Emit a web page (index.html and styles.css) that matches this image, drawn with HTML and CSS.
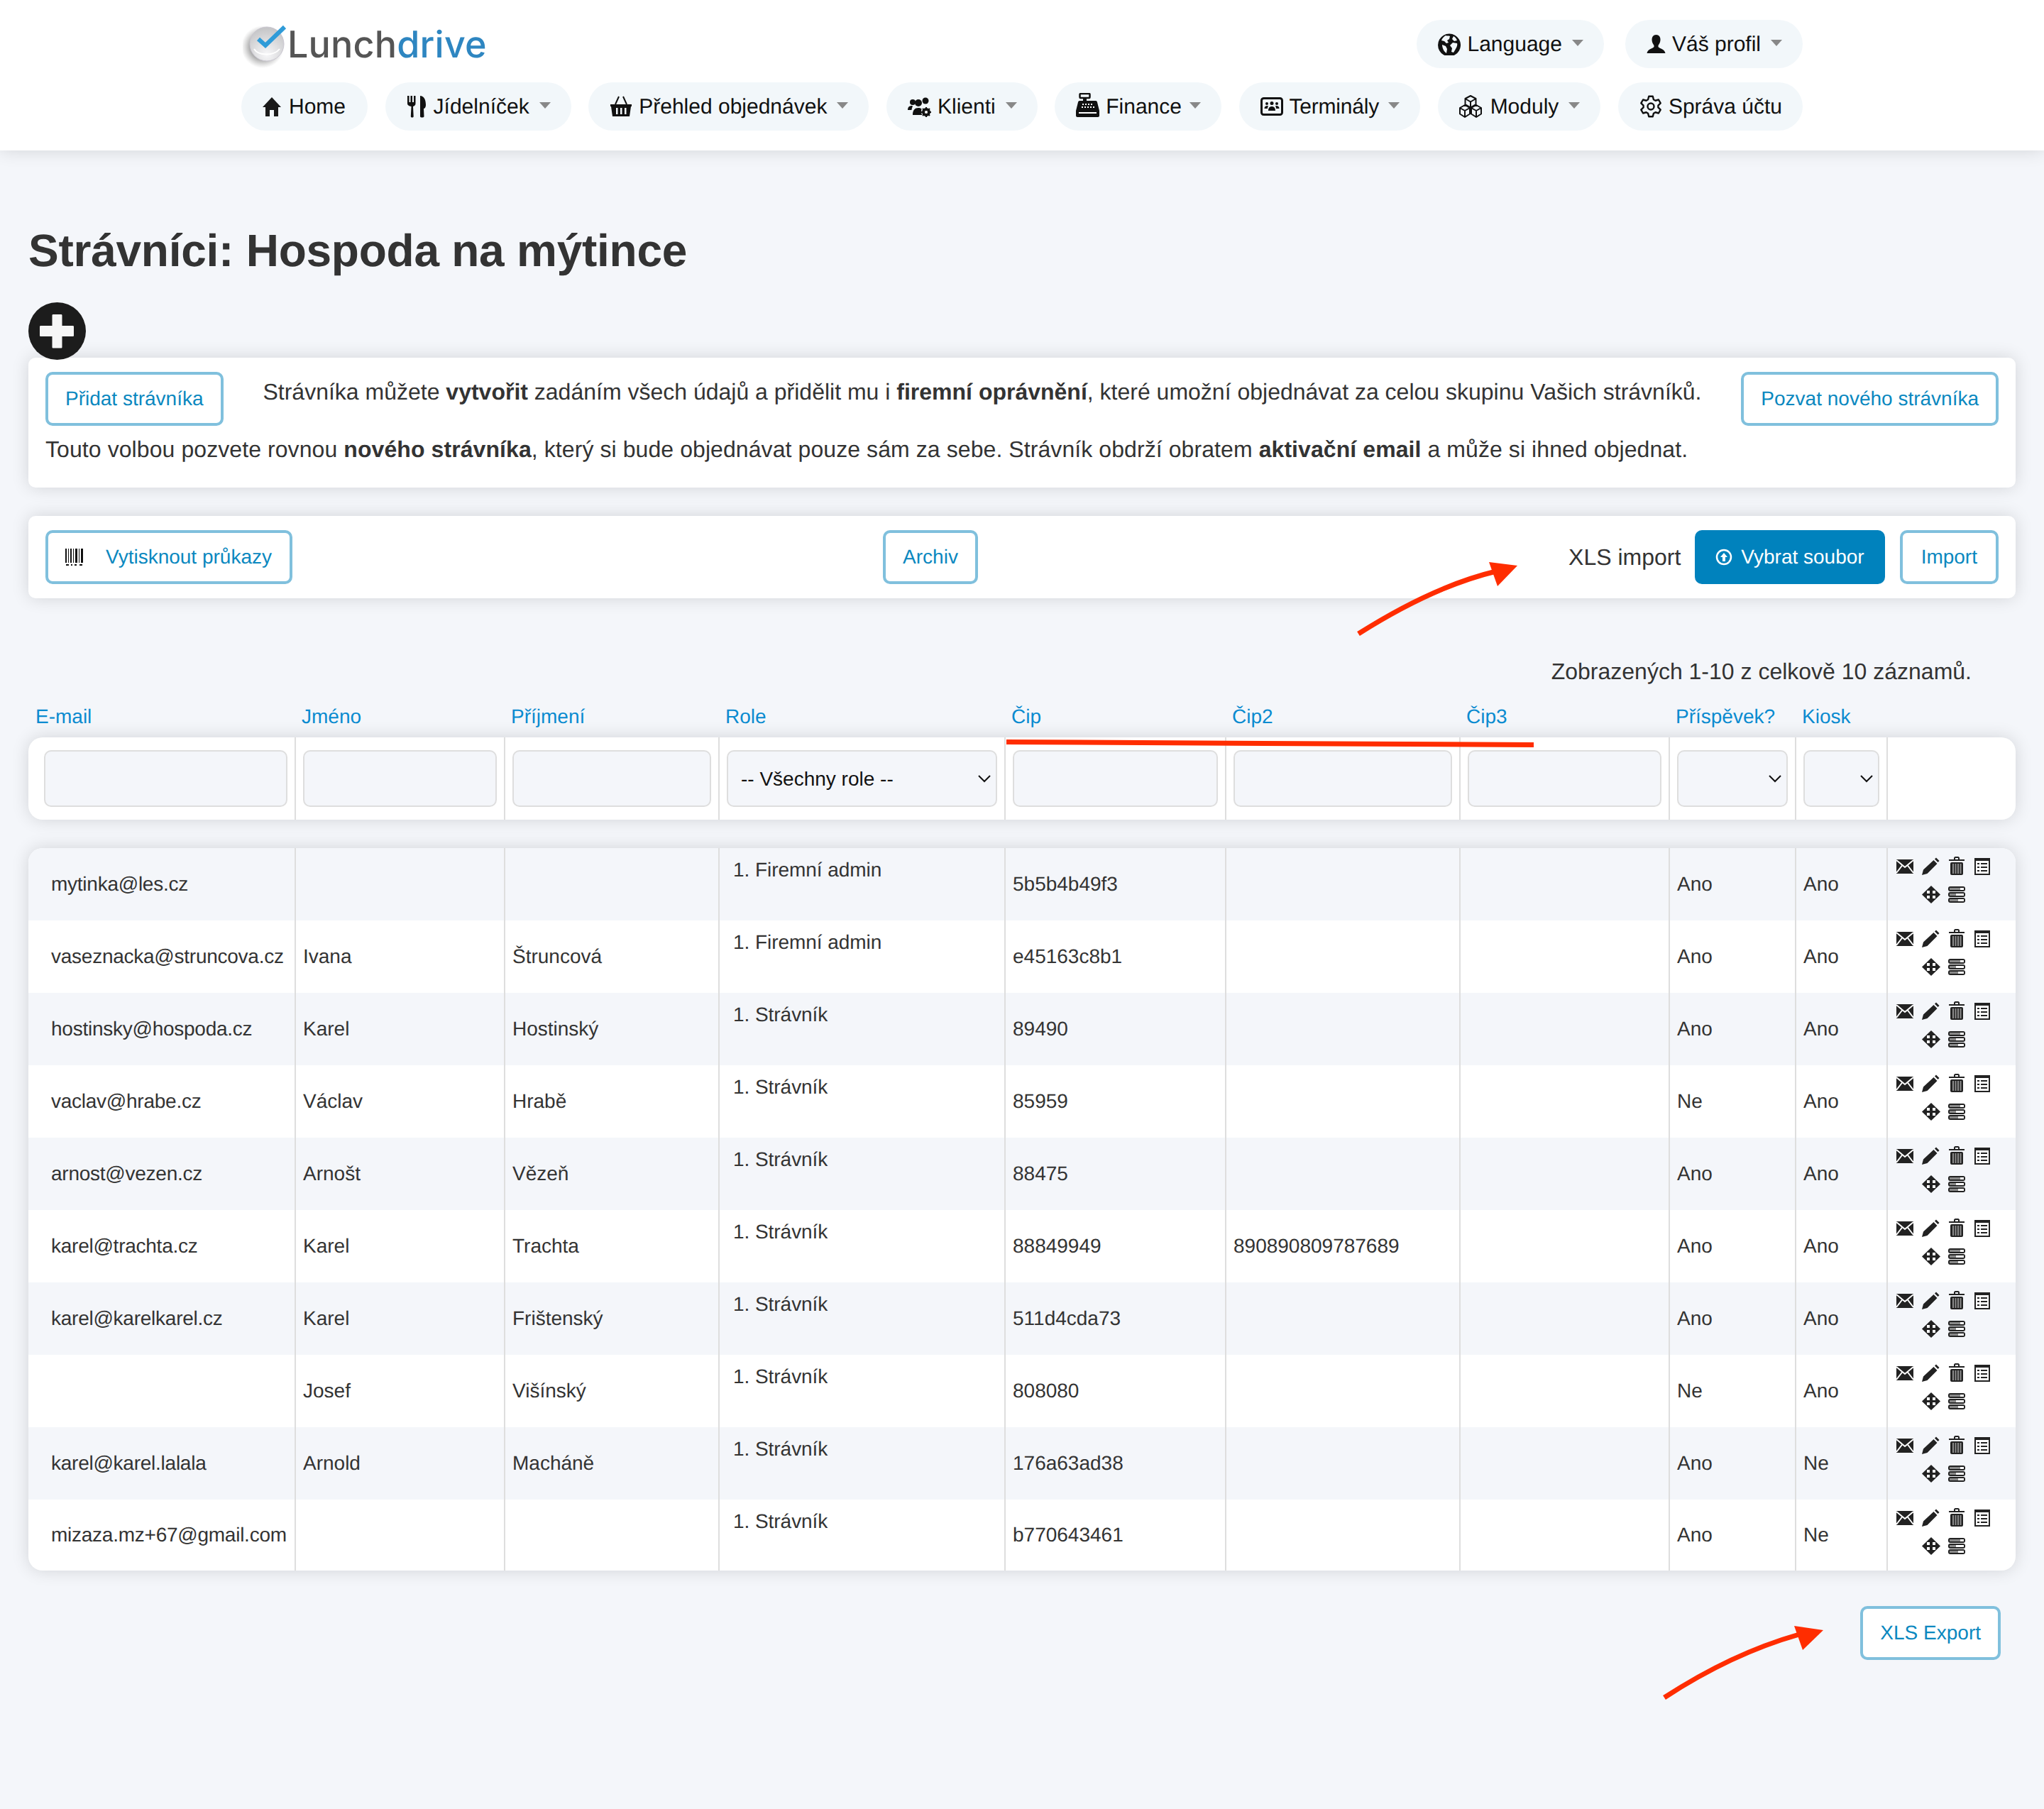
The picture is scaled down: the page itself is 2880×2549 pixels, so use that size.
FILE: index.html
```html
<!DOCTYPE html>
<html lang="cs">
<head>
    <meta charset="UTF-8">
    <title>Strávníci: Hospoda na mýtince - Lunchdrive</title>
    <link rel="stylesheet" href="styles.css">
</head>
<body>

<!-- sdilene ikony -->
<svg class="defs" width="0" height="0">
    <symbol id="i-mail" viewBox="0 0 28 28"><rect x="1" y="4" width="24" height="20" fill="#222"/><path d="M1 5l12 10L25 5M1 23l8.500-11M25 23l-8.500-11" fill="none" stroke="#fff" stroke-width="2"/></symbol>
    <symbol id="i-pencil" viewBox="0 0 28 28"><path d="M1 26l2-7.500L17.500 5l5 5L8.500 24zM19 3.500L21 1.500l4.500 4.500-2 2z" fill="#222"/></symbol>
    <symbol id="i-trash" viewBox="0 0 28 28"><path d="M3 4h7V2c0-1 1-2 2-2h4c1 0 2 1 2 2v2h7v2H3zM12 2v2h4V2z" fill="#222" fill-rule="evenodd"/><rect x="5" y="8" width="18" height="18" rx="2" fill="#222"/><path d="M9 10v14M12.500 10v14M16 10v14M19.500 10v14" stroke="#8a8a8a" stroke-width="2"/></symbol>
    <symbol id="i-list" viewBox="0 0 28 28"><rect x="3" y="2" width="22" height="24" fill="#222"/><rect x="5" y="6" width="18" height="18" fill="#fff"/><path d="M7 9h3v2H7zM12 9h9v2h-9zM7 14h3v2H7zM12 14h9v2h-9zM7 19h3v2H7zM12 19h9v2h-9z" fill="#222"/></symbol>
    <symbol id="i-move" viewBox="0 0 28 28"><path d="M14 1l13 12.500L14 26 1 13.500z" fill="#222"/><path d="M8 8h4v4H8zM16 8h4v4h-4zM8 15h4v4H8zM16 15h4v4h-4z" fill="#fff"/></symbol>
    <symbol id="i-tasks" viewBox="0 0 28 28"><rect x="2" y="2" width="24" height="7" rx="3" fill="#222"/><rect x="2" y="10" width="24" height="7" rx="3" fill="#222"/><rect x="2" y="18" width="24" height="7" rx="3" fill="#222"/><rect x="4" y="4" width="20" height="3" fill="#fff"/><rect x="4" y="12" width="20" height="3" fill="#fff"/><rect x="4" y="20" width="20" height="3" fill="#fff"/><rect x="4" y="4" width="15" height="3" fill="#888"/><rect x="4" y="12" width="9" height="3" fill="#888"/><rect x="4" y="20" width="12" height="3" fill="#888"/></symbol>
</svg>

<header class="topbar">
    <div class="topbar-in">
        <div class="toprow">
            <a class="logo" href="#">
                <svg class="logo-mark" width="70" height="76" viewBox="0 0 70 76">
                    <defs>
                        <radialGradient id="disc" cx="0.5" cy="0.8" r="0.9">
                            <stop offset="0" stop-color="#f7f7f9"/>
                            <stop offset="1" stop-color="#bdbdbf"/>
                        </radialGradient>
                        <radialGradient id="drop" cx="0.5" cy="0.5" r="0.5">
                            <stop offset="0.6" stop-color="#777" stop-opacity="0.6"/>
                            <stop offset="1" stop-color="#999" stop-opacity="0"/>
                        </radialGradient>
                    </defs>
                    <circle cx="28" cy="41" r="30" fill="url(#drop)"/>
                    <circle cx="34" cy="37" r="24" fill="url(#disc)" stroke="#c9c6d0"/>
                    <path d="M16 44c6 10 28 10 36 0" fill="none" stroke="#fff" stroke-width="2"/>
                    <path d="M22 30l10 9L59 13" fill="none" stroke="#2f9bd8" stroke-width="6"/>
                </svg>
                <span class="logo-txt">Lunch<b>drive</b></span>
            </a>
            <a class="pill" href="#">
                <svg class="ico" width="32" height="32" viewBox="0 0 32 32"><path d="M16 1.500a16 16 0 1 0 .1 0zM11 4c2 1 4 0 6 1l-1 4-3 2 2 3-3 1-3-3-4-1c1-3 3-5 6-7zM21 14l6 1c1 3-1 6-2 8l-3 5-3-1 1-5-3-4zM6 17l5 2 2 4-1 6c-3-2-6-7-6-12zM22 5c2 1 4 3 5 6l-4 1-3-3z" fill="#111" fill-rule="evenodd"/></svg>
                Language<i class="caret"></i>
            </a>
            <a class="pill" href="#">
                <svg class="ico ico-user" width="27" height="32" viewBox="0 0 27 32"><path d="M13.500 3c4 0 6 3 6 7 0 3-1.500 6-3 8v2c1 2 9 3 10 9H.5c1-6 9-7 10-9v-2c-1.500-2-3-5-3-8 0-4 2-7 6-7z" fill="#111"/></svg>
                Váš profil<i class="caret"></i>
            </a>
        </div>
        <nav class="navrow">
            <a class="pill pill-home" href="#">
                <svg class="ico ico-home" width="26" height="32" viewBox="0 0 26 32"><path d="M13 3l13 14h-4v13h-6v-9h-6v9H4V17H0z" fill="#1a1a1a"/></svg>
                Home
            </a>
            <a class="pill" href="#">
                <svg class="ico ico-cut" width="28" height="32" viewBox="0 0 28 32"><path d="M1 1h2.500v9H5.500V1H8v9h2V1h2.500v11c0 2-1.500 3.500-3.500 4l.7 14c0 2-3.900 2-3.900 0l.7-14C3 15.500 1 14 1 12zM19 1c5 0 8 5 8 13 0 3-1.500 5-3 5l.5 11c0 2-5.500 2-5.500 0z" fill="#111"/></svg>
                Jídelníček<i class="caret"></i>
            </a>
            <a class="pill" href="#">
                <svg class="ico" width="32" height="32" viewBox="0 0 32 32"><path d="M1 13h30v3h-1l-2 14H4L2 16H1zM9 18v9h2.500v-9zM15 18v9h2.500v-9zM21 18v9h2.500v-9z" fill="#111" fill-rule="evenodd"/><path d="M8 13l5-11M24 13L19 2" stroke="#111" stroke-width="2" fill="none"/></svg>
                Přehled objednávek<i class="caret"></i>
            </a>
            <a class="pill" href="#">
                <svg class="ico" width="33" height="32" viewBox="0 0 33 32"><circle cx="7" cy="10" r="4" fill="#111"/><circle cx="25" cy="8" r="4.500" fill="#111"/><circle cx="15" cy="11" r="5" fill="#111"/><path d="M0 21c0-4 2-6 6-6l1 .5C6 18 5.500 20 5.500 21zM7 28c0-7 3-10 8-10 2 0 3.500.5 4.500 1.500-1 3 0 8 1 8.500z" fill="#111"/><circle cx="26" cy="24" r="4.500" fill="none" stroke="#111" stroke-width="3"/><path d="M26 17v14M19 24h14M21 19l10 10M31 19L21 29" stroke="#111" stroke-width="2"/><circle cx="26" cy="24" r="2" fill="#fff"/></svg>
                Klienti<i class="caret"></i>
            </a>
            <a class="pill pill-fin" href="#">
                <svg class="ico ico-fin" width="33" height="34" viewBox="0 0 33 34"><rect x="5.500" y="1" width="14" height="6" rx="1" fill="none" stroke="#111" stroke-width="2.500"/><path d="M10 7h5v4h-5z" fill="#111"/><path d="M5 11h23c1 0 2 1 2 2l3 12v7c0 1-1 2-2 2H2c-1 0-2-1-2-2v-7l3-12c0-1 1-2 2-2z" fill="#111"/><path d="M9 15h2v2H9zM13 15h2v2h-2zM17 15h2v2h-2zM21 15h2v2h-2zM8 19h2v2H8zM12 19h2v2h-2zM16 19h2v2h-2zM20 19h2v2h-2zM24 19h2v2h-2zM4 27h25v2H4z" fill="#fff"/></svg>
                Finance<i class="caret"></i>
            </a>
            <a class="pill pill-term" href="#">
                <svg class="ico" width="32" height="32" viewBox="0 0 32 32"><rect x="1.500" y="4.500" width="29" height="23" rx="3" fill="none" stroke="#111" stroke-width="3"/><circle cx="9" cy="12" r="2" fill="#111"/><circle cx="16" cy="11.500" r="2.500" fill="#111"/><circle cx="23" cy="12" r="2" fill="#111"/><path d="M5.500 19c0-3 2-4 4-4 1 0 1.500.5 1.500.5-1 1-1 3-1 3.500zM26.500 19c0-3-2-4-4-4-1 0-1.500.5-1.500.5 1 1 1 3 1 3.500zM11 22c0-4 2-6 5-6s5 2 5 6z" fill="#111"/></svg>
                Terminály<i class="caret"></i>
            </a>
            <a class="pill pill-mod" href="#">
                <svg class="ico" width="32" height="32" viewBox="0 0 32 32"><g fill="none" stroke="#111" stroke-width="2" stroke-linejoin="round"><path d="M16 1l7.500 4v8L16 17.500 8.500 13V5zM8.500 5L16 9.500 23.500 5M16 9.500v8"/><path d="M8 14l7 4v8.500L8 31l-7-4.500V18zM1 18l7 4 7-4M8 22v9"/><path d="M24 14l7 4v8.500L24 31l-7-4.500V18zM17 18l7 4 7-4M24 22v9"/></g></svg>
                Moduly<i class="caret"></i>
            </a>
            <a class="pill" href="#">
                <svg class="ico" width="32" height="32" viewBox="0 0 32 32"><polygon points="12.070,6.260 13.230,1.770 18.770,1.770 19.930,6.260 22.460,7.730 26.940,6.490 29.710,11.280 26.400,14.540 26.400,17.460 29.710,20.720 26.940,25.510 22.460,24.270 19.930,25.740 18.770,30.230 13.230,30.230 12.070,25.740 9.540,24.270 5.060,25.510 2.290,20.720 5.600,17.460 5.600,14.540 2.290,11.280 5.060,6.490 9.540,7.730" fill="none" stroke="#111" stroke-width="2.400" stroke-linejoin="round"/><circle cx="16" cy="16" r="4.500" fill="none" stroke="#111" stroke-width="2.400"/></svg>
                Správa účtu
            </a>
        </nav>
    </div>
</header>

<main class="obsah">
    <h1>Strávníci: Hospoda na mýtince</h1>

    <svg class="plus" width="81" height="81" viewBox="0 0 81 81"><circle cx="40.500" cy="40.500" r="40.500" fill="#1c1c1c"/><path d="M35 17h11c1 0 1.500.5 1.500 1.500V33h15c1 0 1.500.5 1.500 1.500v12c0 1-.5 1.500-1.500 1.500h-15v15c0 1-.5 1.500-1.500 1.500H35c-1 0-1.500-.5-1.500-1.500V48h-16c-1 0-1.500-.5-1.500-1.500v-12c0-1 .5-1.500 1.500-1.500h16V18.500c0-1 .5-1.500 1.500-1.500z" fill="#f6f6f6"/></svg>

    <section class="karta karta-info">
        <div class="info-radek">
            <a class="btn" href="#">Přidat strávníka</a>
            <p class="info-stred">Strávníka můžete <b>vytvořit</b> zadáním všech údajů a přidělit mu i <b>firemní oprávnění</b>, které umožní objednávat za celou skupinu Vašich strávníků.</p>
            <a class="btn" href="#">Pozvat nového strávníka</a>
        </div>
        <p class="info-dole">Touto volbou pozvete rovnou <b>nového strávníka</b>, který si bude objednávat pouze sám za sebe. Strávník obdrží obratem <b>aktivační email</b> a může si ihned objednat.</p>
    </section>

    <section class="karta karta-akce">
        <a class="btn btn-tisk" href="#">
            <svg width="26" height="24" viewBox="0 0 26 24"><path d="M0 0h2v20H0zM4 0h1v20H4zM7 0h2v20H7zM11 0h1v20h-1zM14 0h3v20h-3zM19 0h1v20h-1zM22 0h3v20h-3zM1 22h4v2H1zM8 22h2v2H8zM13 22h3v2h-3zM20 22h4v2h-4z" fill="#111"/></svg>
            Vytisknout průkazy
        </a>
        <a class="btn" href="#">Archiv</a>
        <div class="import">
            <span class="import-txt">XLS import</span>
            <a class="btn btn-plny" href="#">
                <svg width="24" height="24" viewBox="0 0 24 24"><circle cx="12" cy="12" r="10" fill="none" stroke="#fff" stroke-width="2.500"/><path d="M12 6l5 6h-3v6h-4v-6H7z" fill="#fff"/></svg>
                Vybrat soubor
            </a>
            <a class="btn btn-import" href="#">Import</a>
        </div>
    </section>

    <p class="pocet">Zobrazených 1-10 z celkově 10 záznamů.</p>

    <div class="sloupce hlavicka">
        <a href="#">E-mail</a>
        <a href="#">Jméno</a>
        <a href="#">Příjmení</a>
        <a href="#">Role</a>
        <a href="#">Čip</a>
        <a href="#">Čip2</a>
        <a href="#">Čip3</a>
        <a href="#">Příspěvek?</a>
        <a href="#">Kiosk</a>
        <span></span>
    </div>

    <div class="sloupce filtr">
        <div><input type="text"></div>
        <div><input type="text"></div>
        <div><input type="text"></div>
        <div><select><option>-- Všechny role --</option></select></div>
        <div><input type="text"></div>
        <div><input type="text"></div>
        <div><input type="text"></div>
        <div><select><option></option></select></div>
        <div><select><option></option></select></div>
        <div></div>
    </div>

    <div class="data">
        <div class="sloupce radek">
            <div>mytinka@les.cz</div><div></div><div></div><div class="role">1. Firemní admin</div><div>5b5b4b49f3</div><div></div><div></div><div>Ano</div><div>Ano</div>
            <div class="ikony"><svg><use href="#i-mail"/></svg><svg><use href="#i-pencil"/></svg><svg><use href="#i-trash"/></svg><svg><use href="#i-list"/></svg><svg><use href="#i-move"/></svg><svg><use href="#i-tasks"/></svg></div>
        </div>
        <div class="sloupce radek">
            <div>vaseznacka@struncova.cz</div><div>Ivana</div><div>Štruncová</div><div class="role">1. Firemní admin</div><div>e45163c8b1</div><div></div><div></div><div>Ano</div><div>Ano</div>
            <div class="ikony"><svg><use href="#i-mail"/></svg><svg><use href="#i-pencil"/></svg><svg><use href="#i-trash"/></svg><svg><use href="#i-list"/></svg><svg><use href="#i-move"/></svg><svg><use href="#i-tasks"/></svg></div>
        </div>
        <div class="sloupce radek">
            <div>hostinsky@hospoda.cz</div><div>Karel</div><div>Hostinský</div><div class="role">1. Strávník</div><div>89490</div><div></div><div></div><div>Ano</div><div>Ano</div>
            <div class="ikony"><svg><use href="#i-mail"/></svg><svg><use href="#i-pencil"/></svg><svg><use href="#i-trash"/></svg><svg><use href="#i-list"/></svg><svg><use href="#i-move"/></svg><svg><use href="#i-tasks"/></svg></div>
        </div>
        <div class="sloupce radek">
            <div>vaclav@hrabe.cz</div><div>Václav</div><div>Hrabě</div><div class="role">1. Strávník</div><div>85959</div><div></div><div></div><div>Ne</div><div>Ano</div>
            <div class="ikony"><svg><use href="#i-mail"/></svg><svg><use href="#i-pencil"/></svg><svg><use href="#i-trash"/></svg><svg><use href="#i-list"/></svg><svg><use href="#i-move"/></svg><svg><use href="#i-tasks"/></svg></div>
        </div>
        <div class="sloupce radek">
            <div>arnost@vezen.cz</div><div>Arnošt</div><div>Vězeň</div><div class="role">1. Strávník</div><div>88475</div><div></div><div></div><div>Ano</div><div>Ano</div>
            <div class="ikony"><svg><use href="#i-mail"/></svg><svg><use href="#i-pencil"/></svg><svg><use href="#i-trash"/></svg><svg><use href="#i-list"/></svg><svg><use href="#i-move"/></svg><svg><use href="#i-tasks"/></svg></div>
        </div>
        <div class="sloupce radek">
            <div>karel@trachta.cz</div><div>Karel</div><div>Trachta</div><div class="role">1. Strávník</div><div>88849949</div><div>890890809787689</div><div></div><div>Ano</div><div>Ano</div>
            <div class="ikony"><svg><use href="#i-mail"/></svg><svg><use href="#i-pencil"/></svg><svg><use href="#i-trash"/></svg><svg><use href="#i-list"/></svg><svg><use href="#i-move"/></svg><svg><use href="#i-tasks"/></svg></div>
        </div>
        <div class="sloupce radek">
            <div>karel@karelkarel.cz</div><div>Karel</div><div>Frištenský</div><div class="role">1. Strávník</div><div>511d4cda73</div><div></div><div></div><div>Ano</div><div>Ano</div>
            <div class="ikony"><svg><use href="#i-mail"/></svg><svg><use href="#i-pencil"/></svg><svg><use href="#i-trash"/></svg><svg><use href="#i-list"/></svg><svg><use href="#i-move"/></svg><svg><use href="#i-tasks"/></svg></div>
        </div>
        <div class="sloupce radek">
            <div></div><div>Josef</div><div>Višínský</div><div class="role">1. Strávník</div><div>808080</div><div></div><div></div><div>Ne</div><div>Ano</div>
            <div class="ikony"><svg><use href="#i-mail"/></svg><svg><use href="#i-pencil"/></svg><svg><use href="#i-trash"/></svg><svg><use href="#i-list"/></svg><svg><use href="#i-move"/></svg><svg><use href="#i-tasks"/></svg></div>
        </div>
        <div class="sloupce radek">
            <div>karel@karel.lalala</div><div>Arnold</div><div>Macháně</div><div class="role">1. Strávník</div><div>176a63ad38</div><div></div><div></div><div>Ano</div><div>Ne</div>
            <div class="ikony"><svg><use href="#i-mail"/></svg><svg><use href="#i-pencil"/></svg><svg><use href="#i-trash"/></svg><svg><use href="#i-list"/></svg><svg><use href="#i-move"/></svg><svg><use href="#i-tasks"/></svg></div>
        </div>
        <div class="sloupce radek">
            <div>mizaza.mz+67@gmail.com</div><div></div><div></div><div class="role">1. Strávník</div><div>b770643461</div><div></div><div></div><div>Ano</div><div>Ne</div>
            <div class="ikony"><svg><use href="#i-mail"/></svg><svg><use href="#i-pencil"/></svg><svg><use href="#i-trash"/></svg><svg><use href="#i-list"/></svg><svg><use href="#i-move"/></svg><svg><use href="#i-tasks"/></svg></div>
        </div>
    </div>

    <div class="export">
        <a class="btn" href="#">XLS Export</a>
    </div>
</main>

<!-- cervene sipky pres obrazovku -->
<svg class="sipky" width="2880" height="2549" viewBox="0 0 2880 2549">
    <path d="M1914 893Q2020 826 2108 805" fill="none" stroke="#ff2d00" stroke-width="7"/>
    <polygon points="2098,792 2138,797 2110,826" fill="#ff2d00"/>
    <path d="M1418 1045.500L2161 1049.500" stroke="#ff2d00" stroke-width="7"/>
    <path d="M2345 2392Q2440 2330 2535 2303" fill="none" stroke="#ff2d00" stroke-width="7"/>
    <polygon points="2528,2291 2569,2297 2540,2325" fill="#ff2d00"/>
</svg>

</body>
</html>
```

FILE: styles.css
```css
html, body {
    margin: 0;
    padding: 0;
}
body {
    position: relative;
    min-height: 2549px;
    background-color: #f4f6fa;
    font-family: "Liberation Sans", Arial, sans-serif;
    font-size: 32px;
    color: #333;
    overflow: hidden;
    text-rendering: geometricPrecision;
}
a {
    text-decoration: none;
}
.defs {
    position: absolute;
}

/* horni lista */
.topbar {
    background: #fff;
    height: 212px;
    box-sizing: border-box;
    padding-top: 28px;
    box-shadow: 0 0 24px rgba(0,0,0,0.14);
}
.topbar-in {
    width: 2200px;
    margin: 0 auto;
}
.toprow {
    display: flex;
    align-items: center;
    gap: 30px;
    height: 68px;
}
.navrow {
    display: flex;
    justify-content: space-between;
    margin-top: 20px;
}
.logo {
    display: flex;
    align-items: center;
    margin-right: auto;
    height: 68px;
}
.logo-mark {
    margin: 2px 0 0 2px;
}
.logo-txt {
    margin-left: -7px;
    font-family: Inter, sans-serif;
    font-size: 52px;
    font-weight: 450;
    letter-spacing: 0.2px;
    color: #555;
}
.logo-txt b {
    font-weight: 450;
    color: #2e86c1;
}
.pill {
    display: flex;
    align-items: center;
    height: 68px;
    box-sizing: border-box;
    padding: 2px 29px 0 30px;
    border-radius: 34px;
    background: #f2f7fa;
    font-size: 30px;
    color: #111;
    white-space: nowrap;
}
.pill-home {
    padding-right: 31px;
}
.pill-fin .caret {
    margin-left: 11px;
}
.pill-term {
    letter-spacing: -0.2px;
}
.pill-term .caret {
    margin-left: 13px;
}
.pill-mod .ico {
    margin-right: 12px;
}
.ico {
    margin-right: 9px;
    margin-top: -2px;
    flex: none;
}
.ico-home {
    margin-right: 11px;
}
.ico-cut {
    margin-right: 10px;
}
.ico-fin {
    margin-top: -6px;
}
.caret {
    width: 0;
    height: 0;
    margin-left: 14px;
    margin-top: -6px;
    border-left: 8px solid transparent;
    border-right: 8px solid transparent;
    border-top: 9px solid #888;
}

/* obsah */
.obsah {
    width: 2800px;
    margin: 0 auto;
    padding-top: 103px;
}
h1 {
    margin: 0 0 34px;
    font-size: 64px;
    line-height: 77px;
    font-weight: bold;
    letter-spacing: -0.25px;
    color: #333;
}
.plus {
    display: block;
    position: relative;
    z-index: 1;
    margin-bottom: -3px;
}
.karta {
    background: #fff;
    border-radius: 10px;
    box-shadow: 0 0 24px rgba(0,0,0,0.14);
    box-sizing: border-box;
}
.karta-info {
    height: 183px;
    padding: 20px 24px 0;
}
.karta-akce {
    display: flex;
    justify-content: space-between;
    margin-top: 40px;
    height: 116px;
    padding: 20px 24px;
}
.info-radek {
    display: flex;
    justify-content: space-between;
}
.info-stred {
    margin: 5px 0 0;
    line-height: 46px;
    text-align: center;
}
.info-dole {
    margin: 10px 0 0;
    line-height: 46px;
    letter-spacing: 0.08px;
}
.btn {
    display: flex;
    align-items: center;
    height: 76px;
    box-sizing: border-box;
    padding: 0 24px;
    background: #fff;
    border: 4px solid #80c0dd;
    border-radius: 10px;
    font-size: 28px;
    color: #0a88c0;
    white-space: nowrap;
}
.btn-tisk {
    padding-right: 25px;
}
.btn-tisk svg {
    margin-right: 31px;
}
.btn-plny {
    padding: 0 25px;
    background: #0082bd;
    border-color: #0082bd;
    color: #fff;
}
.btn-plny svg {
    margin-right: 12px;
}
.btn-import {
    padding: 0 26px;
}
.import {
    display: flex;
    align-items: center;
    gap: 21px;
}
.import-txt {
    margin-right: -1px;
}
.pocet {
    margin: 80px 62px 0 0;
    line-height: 46px;
    text-align: right;
}

/* tabulka */
.sloupce {
    display: grid;
    grid-template-columns: 375px 295px 302px 403px 311px 330px 295px 178px 129px 182px;
}
.hlavicka {
    margin-top: 25px;
    height: 45px;
    font-size: 28px;
    line-height: 32px;
}
.hlavicka a {
    padding-left: 10px;
    color: #0a8bd0;
}
.filtr {
    height: 116px;
    background: #fff;
    border-radius: 20px;
    box-shadow: 0 0 24px rgba(0,0,0,0.14);
}
.filtr > div {
    box-sizing: border-box;
    padding: 18px 10px 18px 10px;
    border-left: 2px solid #dedede;
}
.filtr > div:first-child {
    padding-left: 22px;
    border-left: none;
}
.filtr input, .filtr select {
    display: block;
    width: 100%;
    height: 80px;
    box-sizing: border-box;
    margin: 0;
    padding: 0 0 0 18px;
    background-color: #f4f6fa;
    border: 2px solid #dedede;
    border-radius: 10px;
    font-family: "Liberation Sans", Arial, sans-serif;
    font-size: 28px;
    color: #111;
    outline: none;
}
.filtr select {
    appearance: none;
    background-image: url("data:image/svg+xml,%3Csvg xmlns='http://www.w3.org/2000/svg' width='18' height='11' viewBox='0 0 18 11'%3E%3Cpath d='M1 1l8 8 8-8' fill='none' stroke='%23111' stroke-width='2'/%3E%3C/svg%3E");
    background-repeat: no-repeat;
    background-position: right 7px center;
}
.data {
    margin-top: 40px;
    border-radius: 20px;
    background: #fff;
    box-shadow: 0 0 24px rgba(0,0,0,0.14);
    overflow: hidden;
}
.radek {
    height: 102px;
    font-size: 28px;
    line-height: 32px;
}
.radek:last-child {
    height: 100px;
}
.radek:nth-child(odd) {
    background: #f4f6fa;
}
.radek > div {
    display: flex;
    align-items: center;
    box-sizing: border-box;
    padding-left: 10px;
    border-left: 2px solid #dedede;
    white-space: nowrap;
}
.radek > div:first-child {
    padding-left: 32px;
    border-left: none;
    letter-spacing: -0.25px;
}
.radek > .role {
    align-items: flex-start;
    padding: 15px 0 0 19px;
    letter-spacing: -0.05px;
}
.radek > .ikony {
    display: flex;
    flex-wrap: wrap;
    align-items: flex-start;
    align-content: flex-start;
    justify-content: center;
    gap: 12px 8px;
    width: 160px;
    padding: 12px 0 0;
    border-left: 2px solid #dedede;
}
.ikony svg {
    width: 28px;
    height: 28px;
}
.export {
    display: flex;
    justify-content: flex-end;
    margin-top: 50px;
    padding-right: 21px;
}
.sipky {
    position: absolute;
    top: 0;
    left: 0;
    z-index: 2;
    pointer-events: none;
}
```
